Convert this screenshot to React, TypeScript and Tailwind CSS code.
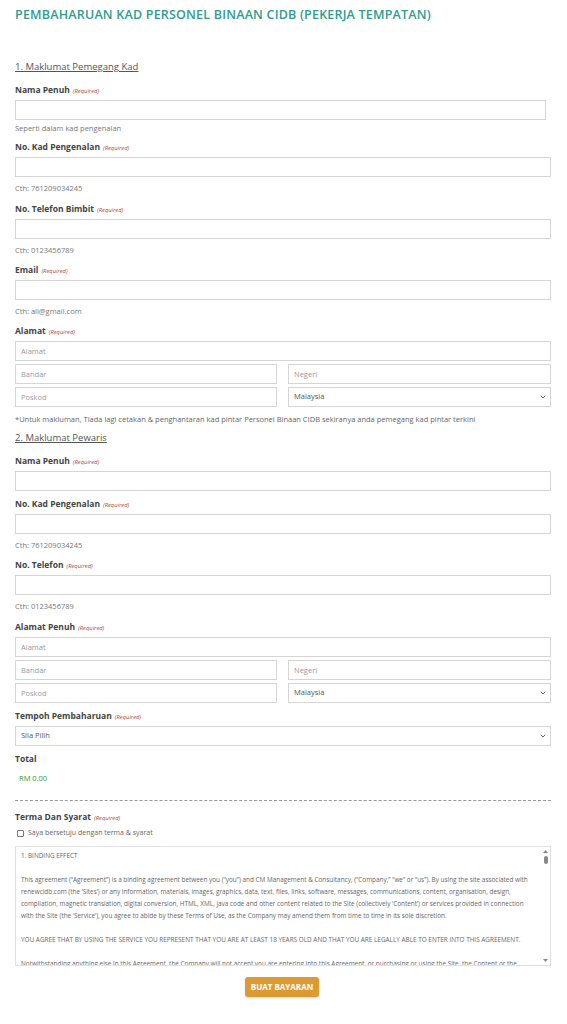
import React from "react";

const F = { fontFamily: '"Open Sans", "Liberation Sans", sans-serif' };

function Req() {
  return <span className="ml-[3px] text-[5.8px] italic font-normal text-[#b0483a]">(Required)</span>;
}

function Label({ children, mt, req = true }: { children: React.ReactNode; mt: string; req?: boolean }) {
  return (
    <div className={`${mt} h-[12px] leading-[12px] text-[8.5px] font-bold text-[#444]`}>
      {children}
      {req && <Req />}
    </div>
  );
}

function Input({ placeholder = "", mt = "mt-[4px]", w = "w-full" }: { placeholder?: string; mt?: string; w?: string }) {
  return (
    <input
      readOnly
      placeholder={placeholder}
      className={`${mt} ${w} block h-[20px] border border-[#d5d5d5] bg-white px-[5px] text-[7.5px] text-[#555] placeholder:text-[#999] outline-none`}
      style={F}
    />
  );
}

function Chevron() {
  return (
    <svg width="6" height="4" viewBox="0 0 6 4" className="mr-[1px]">
      <path d="M0.8 0.8 L3 3 L5.2 0.8" fill="none" stroke="#666" strokeWidth="1" />
    </svg>
  );
}

function Select({ value, mt = "" }: { value: string; mt?: string }) {
  return (
    <div className={`${mt} flex h-[20px] w-full items-center justify-between border border-[#d5d5d5] bg-white pl-[5px] pr-[3px] text-[7.5px] text-[#555]`}>
      <span>{value}</span>
      <Chevron />
    </div>
  );
}

function Helper({ children, mt = "mt-[5px]" }: { children: React.ReactNode; mt?: string }) {
  return <div className={`${mt} h-[12px] leading-[12px] text-[7.5px] text-[#777]`}>{children}</div>;
}

function Address({ first, mt }: { first: string; mt: string }) {
  return (
    <div className={mt}>
      <Input placeholder={first} mt="mt-0" />
      <div className="mt-[3px] flex gap-[11px]">
        <Input placeholder="Bandar" mt="mt-0" w="w-[262px]" />
        <div className="flex-1">
          <Input placeholder="Negeri" mt="mt-0" />
        </div>
      </div>
      <div className="mt-[3px] flex gap-[11px]">
        <Input placeholder="Poskod" mt="mt-0" w="w-[262px]" />
        <div className="flex-1">
          <Select value="Malaysia" />
        </div>
      </div>
    </div>
  );
}

export default function App() {
  return (
    <div className="min-h-[1024px] w-[567px] bg-white pl-[15px] pr-[16px]" style={F}>
      <div className="pt-[5px] h-[25px] leading-[20px] text-[12.5px] font-semibold tracking-[0.2px] text-[#2f9c8e]">
        PEMBAHARUAN KAD PERSONEL BINAAN CIDB (PEKERJA TEMPATAN)
      </div>

      <div className="mt-[35px] h-[14px] leading-[14px] text-[9.5px] text-[#555] underline">1. Maklumat Pemegang Kad</div>

      <Label mt="mt-[10px]">Nama Penuh</Label>
      <Input w="w-[531px]" />
      <Helper mt="mt-[2px]">Seperti dalam kad pengenalan</Helper>

      <Label mt="mt-[7px]">No. Kad Pengenalan</Label>
      <Input />
      <Helper>Cth: 761209034245</Helper>

      <Label mt="mt-[9px]">No. Telefon Bimbit</Label>
      <Input />
      <Helper>Cth: 0123456789</Helper>

      <Label mt="mt-[8px]">Email</Label>
      <Input />
      <Helper>Cth: ali@gmail.com</Helper>

      <Label mt="mt-[8px]">Alamat</Label>
      <Address first="Alamat" mt="mt-[4px]" />

      <div className="mt-[6px] h-[12px] leading-[12px] text-[7.5px] text-[#666]">
        *Untuk makluman, Tiada lagi cetakan &amp; penghantaran kad pintar Personel Binaan CIDB sekiranya anda pemegang kad pintar terkini
      </div>

      <div className="mt-[6px] h-[14px] leading-[14px] text-[9.5px] text-[#555] underline">2. Maklumat Pewaris</div>

      <Label mt="mt-[10px]">Nama Penuh</Label>
      <Input />

      <Label mt="mt-[7px]">No. Kad Pengenalan</Label>
      <Input />
      <Helper>Cth: 761209034245</Helper>

      <Label mt="mt-[8px]">No. Telefon</Label>
      <Input />
      <Helper>Cth: 0123456789</Helper>

      <Label mt="mt-[9px]">Alamat Penuh</Label>
      <Address first="Alamat" mt="mt-[4px]" />

      <Label mt="mt-[7px]">Tempoh Pembaharuan</Label>
      <Select value="Sila Pilih" mt="mt-[4px]" />

      <Label mt="mt-[7px]" req={false}>Total</Label>
      <div className="mt-[7px] h-[12px] pl-[4px] leading-[12px] text-[7.5px] text-[#3c8f3c]">RM 0.00</div>

      <div className="mt-[16px] border-t border-dashed border-[#999]" />

      <Label mt="mt-[10px]">Terma Dan Syarat</Label>
      <div className="mt-[4px] flex h-[12px] items-center pl-[2px] text-[7px] text-[#666]">
        <span className="mr-[4px] inline-block h-[7px] w-[7px] rounded-[1px] border border-[#777] bg-white" />
        Saya bersetuju dengan terma &amp; syarat
      </div>

      <div className="mt-[7px] flex h-[120px] border border-[#e0e0e0] bg-white">
        <div className="flex-1 overflow-hidden pl-[5px] pr-[10px] pt-[3px] text-[6.4px] leading-[12px] text-[#666]">
          <p>1. BINDING EFFECT</p>
          <p className="mt-[12px]">
            This agreement (“Agreement”) is a binding agreement between you (“you”) and CM Management &amp; Consultancy, (“Company,” “we” or “us”). By using the site associated with renewcidb.com (the ‘Sites’) or any information, materials, images, graphics, data, text, files, links, software, messages, communications, content, organisation, design, compilation, magnetic translation, digital conversion, HTML, XML, java code and other content related to the Site (collectively ‘Content’) or services provided in connection with the Site (the ‘Service’), you agree to abide by these Terms of Use, as the Company may amend them from time to time in its sole discretion.
          </p>
          <p className="mt-[12px]">
            YOU AGREE THAT BY USING THE SERVICE YOU REPRESENT THAT YOU ARE AT LEAST 18 YEARS OLD AND THAT YOU ARE LEGALLY ABLE TO ENTER INTO THIS AGREEMENT.
          </p>
          <p className="mt-[12px]">
            Notwithstanding anything else in this Agreement, the Company will not accept you are entering into this Agreement, or purchasing or using the Site, the Content or the Service if you are under the age of 18.
          </p>
        </div>
        <div className="flex w-[7px] flex-col items-center justify-between py-[3px] mr-[1px]">
          <div className="flex flex-col items-center gap-[3px]">
            <svg width="5" height="3" viewBox="0 0 5 3"><path d="M0 3 L2.5 0 L5 3 Z" fill="#888" /></svg>
            <div className="h-[8px] w-[4px] rounded-[2px] bg-[#888]" />
          </div>
          <svg width="5" height="3" viewBox="0 0 5 3"><path d="M0 0 L2.5 3 L5 0 Z" fill="#888" /></svg>
        </div>
      </div>

      <div className="mt-[11px] flex justify-center pr-[2px]">
        <div className="flex h-[20px] w-[74px] items-center justify-center rounded-[3px] bg-[#dd9a33] text-[8px] font-bold text-white shadow-[0_1px_2px_rgba(0,0,0,0.15)]">
          BUAT BAYARAN
        </div>
      </div>
    </div>
  );
}
